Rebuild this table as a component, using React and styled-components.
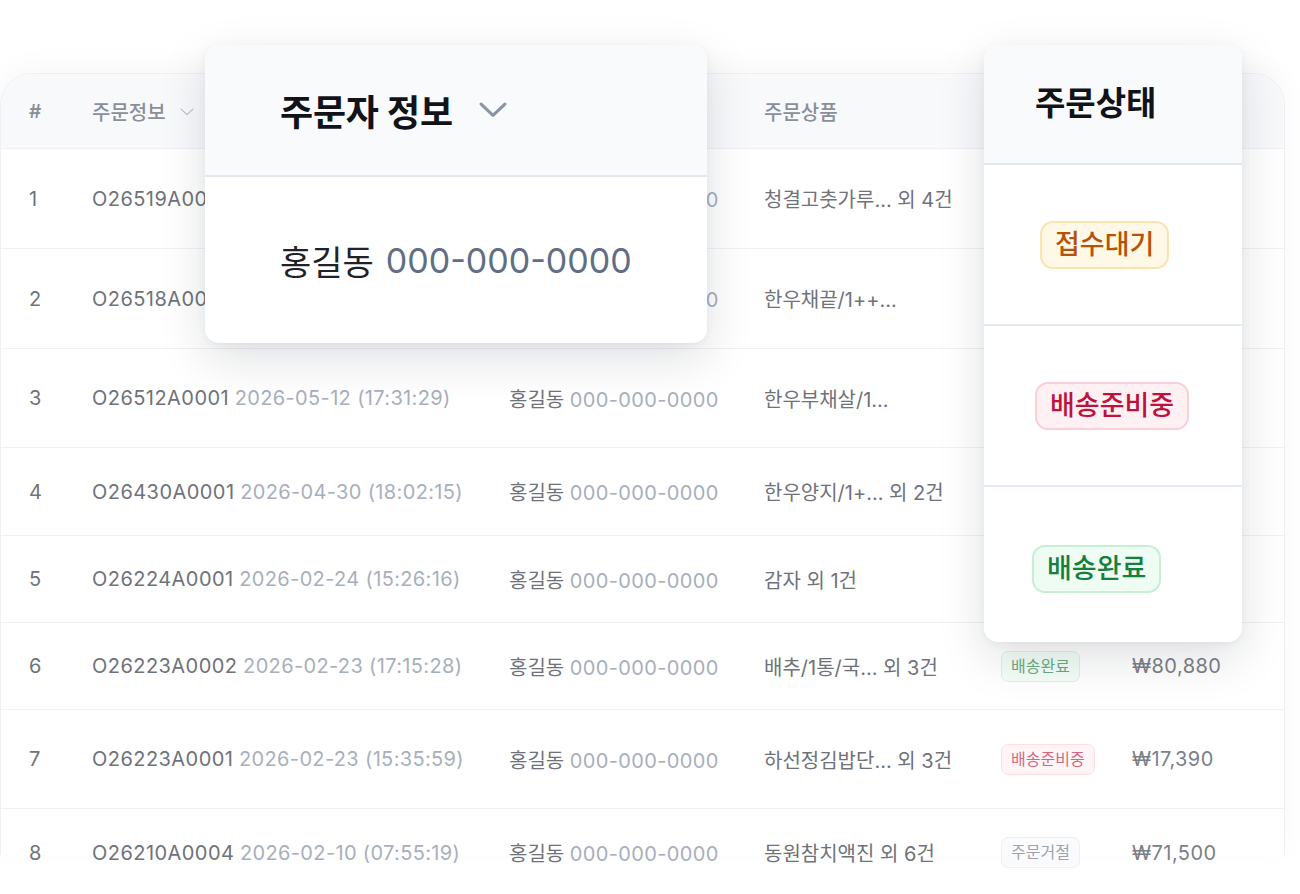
import React from 'react';
import styled, { createGlobalStyle } from 'styled-components';

const GlobalStyle = createGlobalStyle`
  html, body {
    margin: 0;
    padding: 0;
    background: #ffffff;
  }
  body {
    font-family: Inter, "Noto Sans CJK KR", sans-serif;
    -webkit-font-smoothing: antialiased;
  }
`;

const orders = [
  { no: 1, code: 'O26519A0001', date: '2026-05-19 (09:12:44)', product: '청결고춧가루... 외 4건', status: 'wait', amount: '₩52,300', height: 100 },
  { no: 2, code: 'O26518A0002', date: '2026-05-18 (14:20:03)', product: '한우채끝/1++...', status: 'ready', amount: '₩98,000', height: 100 },
  { no: 3, code: 'O26512A0001', date: '2026-05-12 (17:31:29)', product: '한우부채살/1...', status: 'done', amount: '₩64,500', height: 99 },
  { no: 4, code: 'O26430A0001', date: '2026-04-30 (18:02:15)', product: '한우양지/1+... 외 2건', status: 'done', amount: '₩41,200', height: 88 },
  { no: 5, code: 'O26224A0001', date: '2026-02-24 (15:26:16)', product: '감자 외 1건', status: 'done', amount: '₩12,900', height: 87 },
  { no: 6, code: 'O26223A0002', date: '2026-02-23 (17:15:28)', product: '배추/1통/국... 외 3건', status: 'done', amount: '₩80,880', height: 87 },
  { no: 7, code: 'O26223A0001', date: '2026-02-23 (15:35:59)', product: '하선정김밥단... 외 3건', status: 'ready', amount: '₩17,390', height: 99 },
  { no: 8, code: 'O26210A0004', date: '2026-02-10 (07:55:19)', product: '동원참치액진 외 6건', status: 'reject', amount: '₩71,500', height: 88 },
];

const statusLabel = {
  wait: '접수대기',
  ready: '배송준비중',
  done: '배송완료',
  reject: '주문거절',
};

const Chevron = ({ size = 14, color = '#b9bdc6', stroke = 1.5 }) => (
  <svg width={size} height={size * 0.55} viewBox="0 0 20 11" fill="none">
    <path d="M1.5 1.5 L10 9.5 L18.5 1.5" stroke={color} strokeWidth={stroke} strokeLinecap="round" strokeLinejoin="round" />
  </svg>
);

const App = () => {
  return (
    <>
      <GlobalStyle />
      <Page>
        <TableFrame>
          <HeaderRow>
            <HeadCell $first>#</HeadCell>
            <HeadCell>
              주문정보
              <HeadChevron>
                <Chevron />
              </HeadChevron>
            </HeadCell>
            <HeadCell>주문자 정보</HeadCell>
            <HeadCell>주문상품</HeadCell>
            <HeadCell>주문상태</HeadCell>
            <HeadCell>결제금액</HeadCell>
          </HeaderRow>

          {orders.map((o) => (
            <Row key={o.no} $height={o.height}>
              <Cell $first>{o.no}</Cell>
              <Cell>
                <Latin>{o.code}</Latin> <Muted>{o.date}</Muted>
              </Cell>
              <Cell>
                홍길동 <Muted>000-000-0000</Muted>
              </Cell>
              <Cell>{o.product}</Cell>
              <Cell>
                <SmallBadge $kind={o.status}>{statusLabel[o.status]}</SmallBadge>
              </Cell>
              <Cell $amount>
                <Latin>{o.amount}</Latin>
              </Cell>
            </Row>
          ))}
        </TableFrame>

        <BuyerCard>
          <BuyerHead>
            <BuyerTitle>주문자 정보</BuyerTitle>
            <Chevron size={28} color="#8a94a6" stroke={2.2} />
          </BuyerHead>
          <BuyerBody>
            <BuyerName>홍길동</BuyerName>
            <BuyerPhone>000-000-0000</BuyerPhone>
          </BuyerBody>
        </BuyerCard>

        <StatusCard>
          <StatusHead>주문상태</StatusHead>
          <StatusSection>
            <BigBadge $kind="wait" $indent={56}>접수대기</BigBadge>
          </StatusSection>
          <StatusSection>
            <BigBadge $kind="ready" $indent={51}>배송준비중</BigBadge>
          </StatusSection>
          <StatusSection $last>
            <BigBadge $kind="done" $indent={48}>배송완료</BigBadge>
          </StatusSection>
        </StatusCard>
      </Page>
    </>
  );
};

const badgeColors = {
  wait: { bg: '#fff8e6', border: '#fbe3b0', text: '#b45309' },
  ready: { bg: '#fff1f3', border: '#fbcfd8', text: '#be123c' },
  done: { bg: '#effcf3', border: '#c6efd4', text: '#15803d' },
  reject: { bg: '#f8f9fb', border: '#e6e8ee', text: '#6b7280' },
};

const Page = styled.div`
  position: relative;
  width: 1300px;
  height: 894px;
  overflow: hidden;
  padding-top: 73px;
  box-sizing: border-box;
`;

const TableFrame = styled.div`
  width: 1285px;
  height: 782px;
  box-sizing: border-box;
  border: 1px solid #eef0f4;
  border-bottom: none;
  border-radius: 32px 32px 0 0;
  background: #ffffff;
  box-shadow: 0 -6px 30px rgba(15, 23, 42, 0.03);
`;

const gridCols = '91px 417px 255px 237px 131px 1fr';

const HeaderRow = styled.div`
  display: grid;
  grid-template-columns: ${gridCols};
  align-items: center;
  box-sizing: border-box;
  height: 75px;
  background: #f8f9fb;
  border-bottom: 1px solid #eef0f4;
  border-radius: 32px 32px 0 0;
`;

const HeadCell = styled.div`
  display: flex;
  align-items: center;
  padding-left: ${({ $first }) => ($first ? '28px' : '0')};
  font-size: ${({ $first }) => ($first ? '19px' : '20px')};
  font-weight: ${({ $first }) => ($first ? 600 : 500)};
  color: #8b8f98;
  white-space: nowrap;
`;

const HeadChevron = styled.span`
  display: inline-flex;
  margin-left: 14px;
  margin-top: 2px;
`;

const Row = styled.div`
  display: grid;
  grid-template-columns: ${gridCols};
  align-items: center;
  box-sizing: border-box;
  height: ${({ $height }) => $height}px;
  border-bottom: 1px solid #f0f1f5;
`;

const Cell = styled.div`
  padding-left: ${({ $first }) => ($first ? '28px' : '0')};
  font-size: 20px;
  color: ${({ $amount }) => ($amount ? '#7c7f87' : '#6f727a')};
  white-space: nowrap;
`;

const Latin = styled.span`
  letter-spacing: 0.45px;
`;

const Muted = styled.span`
  color: #a8afbc;
  letter-spacing: 0.35px;
`;

const SmallBadge = styled.span`
  display: inline-block;
  padding: 4px 9px;
  font-size: 16px;
  line-height: 21px;
  border-radius: 7px;
  border: 1.5px solid ${({ $kind }) => badgeColors[$kind].border};
  background: ${({ $kind }) => badgeColors[$kind].bg};
  color: ${({ $kind }) => badgeColors[$kind].text};
  opacity: 0.65;
`;

const Card = styled.div`
  position: absolute;
  top: 45px;
  background: #ffffff;
  border-radius: 14px;
  overflow: hidden;
  box-shadow: 0 16px 48px rgba(15, 23, 42, 0.13), 0 2px 10px rgba(15, 23, 42, 0.05);
  display: flex;
  flex-direction: column;
`;

const BuyerCard = styled(Card)`
  left: 205px;
  width: 502px;
  height: 298px;
`;

const BuyerHead = styled.div`
  display: flex;
  align-items: center;
  gap: 26px;
  height: 130px;
  padding-left: 75px;
  background: #f8fafc;
  border-bottom: 2px solid #e3e7f0;
`;

const BuyerTitle = styled.div`
  font-size: 36px;
  font-weight: 700;
  color: #111318;
  letter-spacing: -0.2px;
`;

const BuyerBody = styled.div`
  flex: 1;
  display: flex;
  align-items: center;
  gap: 12px;
  padding-left: 75px;
`;

const BuyerName = styled.span`
  font-size: 34px;
  color: #1f2329;
`;

const BuyerPhone = styled.span`
  font-size: 34px;
  color: #5f6e84;
`;

const StatusCard = styled(Card)`
  left: 984px;
  width: 258px;
  height: 597px;
`;

const StatusHead = styled.div`
  display: flex;
  align-items: center;
  box-sizing: border-box;
  height: 120px;
  padding-left: 51px;
  padding-bottom: 6px;
  background: #f8fafc;
  border-bottom: 2px solid #e3e7f0;
  font-size: 33px;
  font-weight: 700;
  color: #111318;
`;

const StatusSection = styled.div`
  display: flex;
  align-items: center;
  box-sizing: border-box;
  height: ${({ $last }) => ($last ? 'auto' : '161px')};
  flex: ${({ $last }) => ($last ? 1 : 'none')};
  border-bottom: ${({ $last }) => ($last ? 'none' : '2px solid #e6eaf2')};
  padding-top: ${({ $last }) => ($last ? '9px' : '0')};
`;

const BigBadge = styled.span`
  display: inline-block;
  margin-left: ${({ $indent }) => $indent}px;
  padding: 7px 13px;
  font-size: 27px;
  font-weight: 500;
  line-height: 30px;
  border-radius: 13px;
  border: 2px solid ${({ $kind }) => badgeColors[$kind].border};
  background: ${({ $kind }) => badgeColors[$kind].bg};
  color: ${({ $kind }) => badgeColors[$kind].text};
`;

export default App;
